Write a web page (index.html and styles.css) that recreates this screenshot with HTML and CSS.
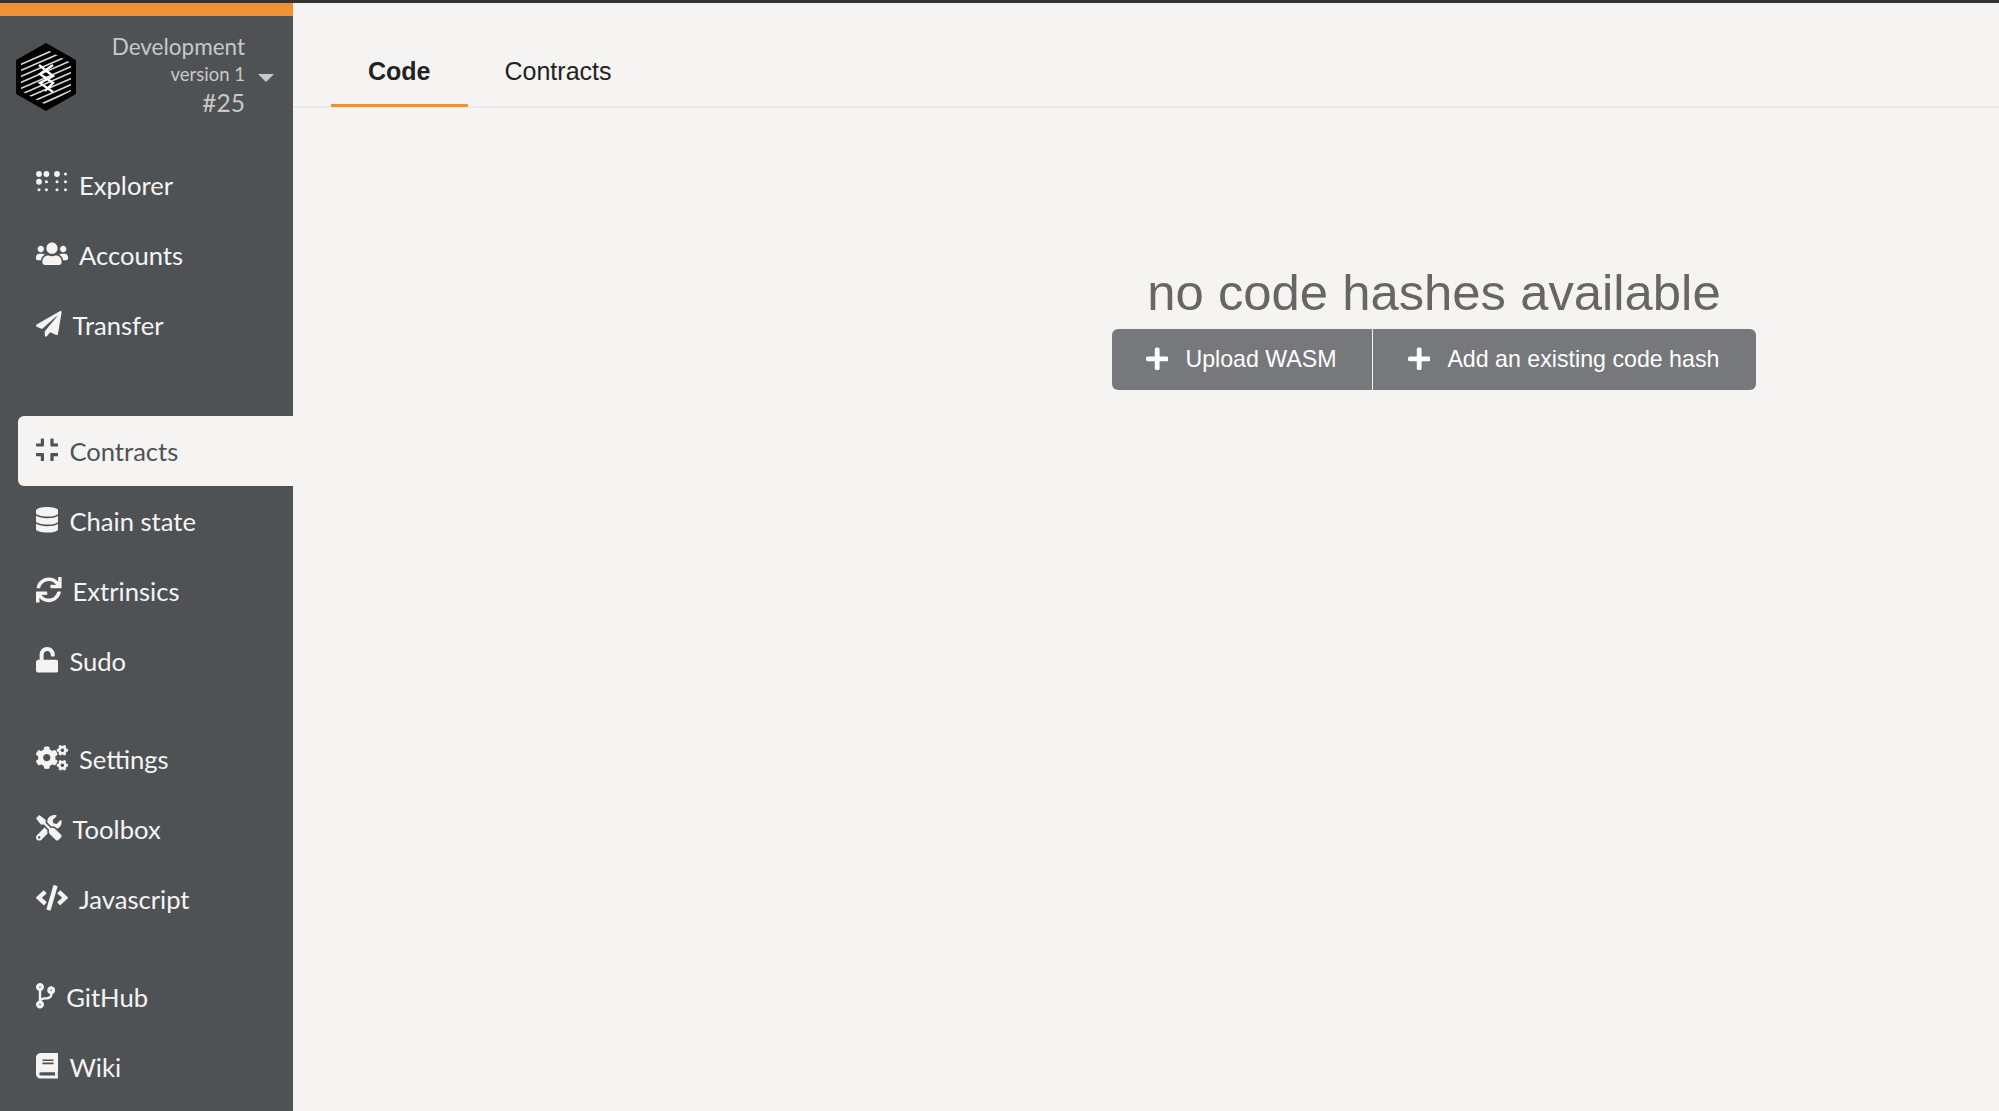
FILE: index.html
```html
<!DOCTYPE html>
<html lang="en">
<head>
  <meta charset="UTF-8">
  <title>Contracts</title>
  <link rel="stylesheet" href="styles.css">
</head>
<body>
  <div class="topbar"></div>
  <div class="app">
    <aside class="sidebar">
      <div class="chain">
        <svg class="logo" viewBox="1 0 60 68">
          <defs>
            <clipPath id="hexclip"><path d="M31 6 L56 20 V48 L31 62 L6 48 V20 Z"/></clipPath>
          </defs>
          <path d="M31 1 L60 17.5 V50.5 L31 67 L2 50.5 V17.5 Z" fill="#000" stroke="#000" stroke-width="2" stroke-linejoin="round"/>
          <g clip-path="url(#hexclip)" stroke="#d8d8d8" stroke-width="1.7">
            <path d="M0 18 L36 2"/>
            <path d="M0 24 L50 2"/>
            <path d="M0 30 L62 3"/>
            <path d="M0 36 L62 9"/>
            <path d="M0 42 L62 15"/>
            <path d="M0 48 L62 21"/>
            <path d="M0 54 L62 27"/>
            <path d="M4 58 L62 33"/>
            <path d="M12 61 L62 39"/>
            <path d="M22 63 L62 45"/>
            <path d="M32 65 L62 52"/>
          </g>
          <path d="M24 22 L38 33 L25 40 L38 49 M38 22 L25 31 L38 40 L30 48" fill="none" stroke="#fff" stroke-width="2.4"/>
        </svg>
        <div class="chain-info">
          <div class="chain-name">Development</div>
          <div class="chain-version">version 1</div>
          <div class="chain-block">#25</div>
        </div>
        <span class="caret"></span>
      </div>

      <nav class="nav">
        <a class="item">
          <svg class="icon" viewBox="0 0 640 512">
            <circle cx="60" cy="60" r="58"/><circle cx="208" cy="60" r="58"/><circle cx="420" cy="60" r="58"/><circle cx="590" cy="60" r="30"/>
            <circle cx="60" cy="215" r="58"/><circle cx="208" cy="215" r="30"/><circle cx="420" cy="215" r="30"/><circle cx="590" cy="215" r="30"/>
            <circle cx="60" cy="375" r="30"/><circle cx="208" cy="375" r="30"/><circle cx="420" cy="375" r="30"/><circle cx="590" cy="375" r="30"/>
          </svg>
          Explorer
        </a>
        <a class="item">
          <svg class="icon" viewBox="0 0 640 512"><path d="M96 224c35.3 0 64-28.7 64-64s-28.7-64-64-64-64 28.7-64 64 28.7 64 64 64zm448 0c35.3 0 64-28.7 64-64s-28.7-64-64-64-64 28.7-64 64 28.7 64 64 64zm32 32h-64c-17.6 0-33.5 7.1-45.1 18.6 40.3 22.1 68.9 62 75.1 109.4h66c17.7 0 32-14.3 32-32v-32c0-35.3-28.7-64-64-64zm-256 0c61.9 0 112-50.1 112-112S381.9 32 320 32 208 82.1 208 144s50.1 112 112 112zm76.8 32h-8.3c-20.8 10-43.9 16-68.5 16s-47.6-6-68.5-16h-8.3C179.6 288 128 339.6 128 403.2V432c0 26.5 21.5 48 48 48h288c26.5 0 48-21.5 48-48v-28.8c0-63.6-51.6-115.2-115.2-115.2zm-223.7-13.4C161.5 263.1 145.6 256 128 256H64c-35.3 0-64 28.7-64 64v32c0 17.7 14.3 32 32 32h65.9c6.3-47.4 34.9-87.3 75.2-109.4z"/></svg>
          Accounts
        </a>
        <a class="item">
          <svg class="icon" viewBox="0 0 512 512"><path d="M476 3.2L12.5 270.6c-18.1 10.4-15.8 35.6 2.2 43.2L121 358.4l287.3-253.2c5.5-4.9 13.3 2.6 8.6 8.3L176 407v80.5c0 23.6 28.5 32.9 42.5 15.8L282 426l124.6 52.2c14.2 6 30.4-2.9 33-18.2l72-432C515 7.8 493.3-6.8 476 3.2z"/></svg>
          Transfer
        </a>

        <a class="item item-active group-large">
          <svg class="icon" viewBox="0 0 448 512"><path d="M436 192H312c-13.3 0-24-10.7-24-24V44c0-6.6 5.4-12 12-12h40c6.6 0 12 5.4 12 12v84h84c6.6 0 12 5.4 12 12v40c0 6.6-5.4 12-12 12zm-276-24V44c0-6.6-5.4-12-12-12h-40c-6.6 0-12 5.4-12 12v84H12c-6.6 0-12 5.4-12 12v40c0 6.6 5.4 12 12 12h124c13.3 0 24-10.7 24-24zm0 300V344c0-13.3-10.7-24-24-24H12c-6.6 0-12 5.4-12 12v40c0 6.6 5.4 12 12 12h84v84c0 6.6 5.4 12 12 12h40c6.6 0 12-5.4 12-12zm192 0v-84h84c6.6 0 12-5.4 12-12v-40c0-6.6-5.4-12-12-12H312c-13.3 0-24 10.7-24 24v124c0 6.6 5.4 12 12 12h40c6.6 0 12-5.4 12-12z"/></svg>
          Contracts
        </a>
        <a class="item">
          <svg class="icon" viewBox="0 0 448 512"><path d="M448 73.143v45.714C448 159.143 347.667 192 224 192S0 159.143 0 118.857V73.143C0 32.857 100.333 0 224 0s224 32.857 224 73.143zM448 176v102.857C448 319.143 347.667 352 224 352S0 319.143 0 278.857V176c48.125 33.143 136.208 48.572 224 48.572S399.874 209.143 448 176zm0 160v102.857C448 479.143 347.667 512 224 512S0 479.143 0 438.857V336c48.125 33.143 136.208 48.572 224 48.572S399.874 369.143 448 336z"/></svg>
          Chain state
        </a>
        <a class="item">
          <svg class="icon" viewBox="0 0 512 512"><path d="M440.65 12.57l4 82.77A247.16 247.16 0 0 0 255.83 8C134.73 8 33.91 94.92 12.29 209.82A12 12 0 0 0 24.09 224h49.05a12 12 0 0 0 11.67-9.26 175.91 175.91 0 0 1 317-56.94l-101.46-4.86a12 12 0 0 0-12.57 12v47.41a12 12 0 0 0 12 12H500a12 12 0 0 0 12-12V12a12 12 0 0 0-12-12h-47.37a12 12 0 0 0-11.98 12.57zM255.83 432a175.61 175.61 0 0 1-146-77.8l101.8 4.87a12 12 0 0 0 12.57-12v-47.4a12 12 0 0 0-12-12H12a12 12 0 0 0-12 12V500a12 12 0 0 0 12 12h47.35a12 12 0 0 0 12-12.6l-4.15-82.57A247.17 247.17 0 0 0 255.83 504c121.11 0 221.93-86.92 243.55-201.82a12 12 0 0 0-11.8-14.18h-49.05a12 12 0 0 0-11.67 9.26A175.86 175.86 0 0 1 255.83 432z"/></svg>
          Extrinsics
        </a>
        <a class="item">
          <svg class="icon" viewBox="0 0 448 512"><path d="M400 256H152V152.9c0-39.6 31.7-72.5 71.3-72.9 40-.4 72.7 32.1 72.7 72v16c0 13.3 10.7 24 24 24h32c13.3 0 24-10.7 24-24v-16C376 68 307.5-.3 223.5 0 139.5.3 72 69.5 72 153.5V256H48c-26.5 0-48 21.5-48 48v160c0 26.5 21.5 48 48 48h352c26.5 0 48-21.5 48-48V304c0-26.5-21.5-48-48-48z"/></svg>
          Sudo
        </a>

        <a class="item group">
          <svg class="icon" viewBox="0 0 640 512"><path d="M512.1 191l-8.2 14.3c-3 5.3-9.4 7.5-15.1 5.4-11.8-4.4-22.6-10.7-32.1-18.6-4.6-3.8-5.8-10.5-2.8-15.7l8.2-14.3c-6.9-8-12.3-17.3-15.9-27.4h-16.5c-6 0-11.2-4.3-12.2-10.3-2-12-2.1-24.6 0-37.1 1-6 6.2-10.4 12.2-10.4h16.5c3.6-10.1 9-19.4 15.9-27.4l-8.2-14.3c-3-5.2-1.9-11.9 2.8-15.7 9.5-7.9 20.4-14.2 32.1-18.6 5.7-2.1 12.1.1 15.1 5.4l8.2 14.3c10.5-1.9 21.2-1.9 31.7 0L552 6.3c3-5.3 9.4-7.5 15.1-5.4 11.8 4.4 22.6 10.7 32.1 18.6 4.6 3.8 5.8 10.5 2.8 15.7l-8.2 14.3c6.9 8 12.3 17.3 15.9 27.4h16.5c6 0 11.2 4.3 12.2 10.3 2 12 2.1 24.6 0 37.1-1 6-6.2 10.4-12.2 10.4h-16.5c-3.6 10.1-9 19.4-15.9 27.4l8.2 14.3c3 5.2 1.9 11.9-2.8 15.7-9.5 7.9-20.4 14.2-32.1 18.6-5.7 2.1-12.1-.1-15.1-5.4l-8.2-14.3c-10.4 1.9-21.2 1.9-31.7 0zm-10.5-58.8c38.5 29.6 82.4-14.3 52.8-52.8-38.5-29.7-82.4 14.3-52.8 52.8zM386.3 286.1l33.7 16.8c10.1 5.8 14.5 18.1 10.5 29.1-8.9 24.2-26.4 46.4-42.6 65.8-7.4 8.9-20.2 11.1-30.3 5.3l-29.1-16.8c-16 13.7-34.6 24.6-54.9 31.7v33.6c0 11.6-8.3 21.6-19.7 23.6-24.6 4.2-50.4 4.4-75.9 0-11.5-2-20-11.9-20-23.6V418c-20.3-7.2-38.9-18-54.9-31.7L74 403c-10 5.8-22.9 3.6-30.3-5.3-16.2-19.4-33.3-41.6-42.2-65.7-4-10.9.4-23.2 10.5-29.1l33.3-16.8c-3.9-20.9-3.9-42.4 0-63.4L12 205.8c-10.1-5.8-14.6-18.1-10.5-29 8.9-24.2 26-46.4 42.2-65.8 7.4-8.9 20.2-11.1 30.3-5.3l29.1 16.8c16-13.7 34.6-24.6 54.9-31.7V57.1c0-11.5 8.2-21.5 19.6-23.5 24.6-4.2 50.5-4.4 76-.1 11.5 2 20 11.9 20 23.6v33.6c20.3 7.2 38.9 18 54.9 31.7l29.1-16.8c10-5.8 22.9-3.6 30.3 5.3 16.2 19.4 33.2 41.6 42.1 65.8 4 10.9.1 23.2-10 29.1l-33.7 16.8c3.9 21 3.9 42.5 0 63.5zm-117.6 21.1c59.2-77-28.7-164.9-105.7-105.7-59.2 77 28.7 164.9 105.7 105.7zm243.4 182.7l-8.2 14.3c-3 5.3-9.4 7.5-15.1 5.4-11.8-4.4-22.6-10.7-32.1-18.6-4.6-3.8-5.8-10.5-2.8-15.7l8.2-14.3c-6.9-8-12.3-17.3-15.9-27.4h-16.5c-6 0-11.2-4.3-12.2-10.3-2-12-2.1-24.6 0-37.1 1-6 6.2-10.4 12.2-10.4h16.5c3.6-10.1 9-19.4 15.9-27.4l-8.2-14.3c-3-5.2-1.9-11.9 2.8-15.7 9.5-7.9 20.4-14.2 32.1-18.6 5.7-2.1 12.1.1 15.1 5.4l8.2 14.3c10.5-1.9 21.2-1.9 31.7 0l8.2-14.3c3-5.3 9.4-7.5 15.1-5.4 11.8 4.4 22.6 10.7 32.1 18.6 4.6 3.8 5.8 10.5 2.8 15.7l-8.2 14.3c6.9 8 12.3 17.3 15.9 27.4h16.5c6 0 11.2 4.3 12.2 10.3 2 12 2.1 24.6 0 37.1-1 6-6.2 10.4-12.2 10.4h-16.5c-3.6 10.1-9 19.4-15.9 27.4l8.2 14.3c3 5.2 1.9 11.9-2.8 15.7-9.5 7.9-20.4 14.2-32.1 18.6-5.7 2.1-12.1-.1-15.1-5.4l-8.2-14.3c-10.4 1.9-21.2 1.9-31.7 0zM501.6 431c38.5 29.6 82.4-14.3 52.8-52.8-38.5-29.6-82.4 14.3-52.8 52.8z"/></svg>
          Settings
        </a>
        <a class="item">
          <svg class="icon" viewBox="0 0 512 512"><path d="M501.1 395.7L384 278.6c-23.1-23.1-57.6-27.6-85.4-13.9L192 158.1V96L64 0 0 64l96 128h62.1l106.6 106.6c-13.6 27.8-9.2 62.3 13.9 85.4l117.1 117.1c14.6 14.6 38.2 14.6 52.7 0l52.7-52.7c14.5-14.6 14.5-38.2 0-52.7zM331.7 225c28.3 0 54.9 11 74.9 31l19.4 19.4c15.8-6.9 30.8-16.5 43.8-29.5 37.1-37.1 49.7-89.3 37.9-136.7-2.2-9-13.5-12.1-20.1-5.5l-74.4 74.4-67.9-11.3L334 98.9l74.4-74.4c6.6-6.6 3.4-17.9-5.7-20.2-47.4-11.7-99.6.9-136.6 37.9-28.5 28.5-41.9 66.1-41.2 103.6l82.1 82.1c8.1-1.9 16.5-2.9 24.7-2.9zm-103.9 82l-56.7-56.7L18.7 402.8c-25 25-25 65.5 0 90.5s65.5 25 90.5 0l123.6-123.6c-7.6-19.9-9.9-41.6-5-62.7zM64 472c-13.2 0-24-10.8-24-24 0-13.3 10.7-24 24-24s24 10.7 24 24c0 13.2-10.7 24-24 24z"/></svg>
          Toolbox
        </a>
        <a class="item">
          <svg class="icon" viewBox="0 0 640 512"><path d="M278.9 511.5l-61-17.7c-6.4-1.8-10-8.5-8.2-14.9L346.2 8.7c1.8-6.4 8.5-10 14.9-8.2l61 17.7c6.4 1.8 10 8.5 8.2 14.9L293.8 503.3c-1.9 6.4-8.5 10.1-14.9 8.2zm-114-112.2l43.5-46.4c4.6-4.9 4.3-12.7-.8-17.2L117 256l90.6-79.7c5.1-4.5 5.5-12.3.8-17.2l-43.5-46.4c-4.5-4.8-12.1-5.1-17-.5L3.8 247.2c-5.1 4.7-5.1 12.8 0 17.5l144.1 135.1c4.9 4.6 12.5 4.4 17-.5zm327.2.6l144.1-135.1c5.1-4.7 5.1-12.8 0-17.5L492.1 112.1c-4.8-4.5-12.4-4.3-17 .5L431.6 159c-4.6 4.9-4.3 12.7.8 17.2L523 256l-90.6 79.7c-5.1 4.5-5.5 12.3-.8 17.2l43.5 46.4c4.5 4.9 12.1 5.1 17 .6z"/></svg>
          Javascript
        </a>

        <a class="item group">
          <svg class="icon" viewBox="0 0 384 512"><path d="M384 144c0-44.2-35.8-80-80-80s-80 35.8-80 80c0 36.4 24.3 67.1 57.5 76.8-.6 16.1-4.2 28.5-11 36.9-15.4 19.2-49.3 22.4-85.2 25.7-28.2 2.6-57.4 5.4-81.3 16.9v-144c32.5-10.2 56-40.5 56-76.3 0-44.2-35.8-80-80-80S0 35.8 0 80c0 35.8 23.5 66.1 56 76.3v199.3C23.5 365.9 0 396.2 0 432c0 44.2 35.8 80 80 80s80-35.8 80-80c0-34-21.2-63.1-51.2-74.6 3.1-5.2 7.8-9.8 14.9-13.4 16.2-8.2 40.4-10.4 66.1-12.8 42.2-3.9 90-8.4 118.2-43.4 14-17.4 21.1-39.8 21.6-67.9 31.6-10.8 54.4-40.7 54.4-75.9zM80 64c8.8 0 16 7.2 16 16s-7.2 16-16 16-16-7.2-16-16 7.2-16 16-16zm0 384c-8.8 0-16-7.2-16-16s7.2-16 16-16 16 7.2 16 16-7.2 16-16 16zm224-320c8.8 0 16 7.2 16 16s-7.2 16-16 16-16-7.2-16-16 7.2-16 16-16z"/></svg>
          GitHub
        </a>
        <a class="item">
          <svg class="icon" viewBox="0 0 448 512"><path d="M448 360V24c0-13.3-10.7-24-24-24H96C43 0 0 43 0 96v320c0 53 43 96 96 96h328c13.3 0 24-10.7 24-24v-16c0-7.5-3.5-14.3-8.9-18.7-4.2-15.4-4.2-59.3 0-74.7 5.4-4.3 8.9-11.1 8.9-18.6zM128 134c0-3.3 2.7-6 6-6h212c3.3 0 6 2.7 6 6v20c0 3.3-2.7 6-6 6H134c-3.3 0-6-2.7-6-6v-20zm0 64c0-3.3 2.7-6 6-6h212c3.3 0 6 2.7 6 6v20c0 3.3-2.7 6-6 6H134c-3.3 0-6-2.7-6-6v-20zm253.4 250H96c-17.7 0-32-14.3-32-32 0-17.6 14.4-32 32-32h285.4c-1.9 17.1-1.9 46.9 0 64z"/></svg>
          Wiki
        </a>
      </nav>
    </aside>

    <main class="main">
      <div class="tabs">
        <a class="tab tab-active">Code</a>
        <a class="tab">Contracts</a>
      </div>
      <div class="empty">
        <h1 class="empty-title">no code hashes available</h1>
        <div class="buttons">
          <button class="btn">
            <svg class="btn-icon" viewBox="0 0 448 512"><path d="M416 208H272V64c0-17.67-14.33-32-32-32h-32c-17.67 0-32 14.33-32 32v144H32c-17.67 0-32 14.33-32 32v32c0 17.67 14.33 32 32 32h144v144c0 17.67 14.33 32 32 32h32c17.67 0 32-14.33 32-32V304h144c17.67 0 32-14.33 32-32v-32c0-17.67-14.33-32-32-32z"/></svg>
            Upload WASM
          </button>
          <button class="btn">
            <svg class="btn-icon" viewBox="0 0 448 512"><path d="M416 208H272V64c0-17.67-14.33-32-32-32h-32c-17.67 0-32 14.33-32 32v144H32c-17.67 0-32 14.33-32 32v32c0 17.67 14.33 32 32 32h144v144c0 17.67 14.33 32 32 32h32c17.67 0 32-14.33 32-32V304h144c17.67 0 32-14.33 32-32v-32c0-17.67-14.33-32-32-32z"/></svg>
            Add an existing code hash
          </button>
        </div>
      </div>
    </main>
  </div>
</body>
</html>
```

FILE: styles.css
```css
* {
  box-sizing: border-box;
}

html, body {
  height: 100%;
}

body {
  margin: 0;
  display: flex;
  flex-direction: column;
  overflow: hidden;
  background: #f5f4f3;
  font-family: "Liberation Sans", Arial, sans-serif;
}

.topbar {
  height: 3px;
  background: #333;
  flex: none;
}

.app {
  flex: 1;
  display: flex;
  min-height: 0;
}

/* sidebar */
.sidebar {
  width: 293px;
  flex: none;
  background: #4f5255;
  border-top: 13px solid #f19135;
  font-family: Lato, sans-serif;
}

.chain {
  height: 134px;
  display: flex;
  align-items: flex-start;
  padding: 20px 0 0 15px;
  color: #c8c8c8;
}

.logo {
  width: 62px;
  height: 68px;
  margin-top: 7px;
  flex: none;
}

.chain-info {
  width: 168px;
  text-align: right;
  line-height: 1;
}

.chain-name {
  font-size: 22.5px;
}

.chain-version {
  font-size: 18.5px;
  margin-top: 6px;
}

.chain-block {
  font-size: 24.5px;
  margin-top: 8px;
}

.caret {
  width: 0;
  height: 0;
  margin: 38px 0 0 13px;
  border-left: 8px solid transparent;
  border-right: 8px solid transparent;
  border-top: 8px solid #c8c8c8;
}

.nav {
  display: flex;
  flex-direction: column;
  padding-left: 18px;
}

.item {
  height: 70px;
  display: flex;
  align-items: center;
  gap: 11px;
  padding-left: 18px;
  font-size: 25.6px;
  color: #f5f4f3;
}

.item-active {
  background: #f5f4f3;
  color: #4f5255;
  border-radius: 6px 0 0 6px;
}

.group {
  margin-top: 28px;
}

.group-large {
  margin-top: 56px;
}

.icon {
  height: 25.6px;
  fill: currentColor;
  flex: none;
  margin-top: -2px;
}

/* main */
.main {
  flex: 1;
  min-width: 0;
}

.tabs {
  height: 105px;
  display: flex;
  padding-left: 38px;
  border-bottom: 2px solid #eaeaea;
}

.tab {
  height: 104px;
  display: flex;
  align-items: center;
  padding: 32px 37px 0;
  font-size: 25px;
  color: #222;
}

.tab-active {
  font-weight: bold;
  padding-top: 35px;
  border-bottom: 3px solid #f19135;
}

.empty {
  width: 644px;
  margin: 153px 0 0 819px;
  text-align: center;
}

.empty-title {
  margin: 0 0 6px;
  padding-top: 2px;
  font-size: 50.8px;
  font-weight: normal;
  line-height: 60px;
  color: #666;
}

.buttons {
  display: flex;
  height: 61px;
}

.btn {
  height: 61px;
  display: flex;
  align-items: center;
  gap: 17px;
  padding: 0 34px;
  border: none;
  background: #77787b;
  color: #fff;
  font-family: inherit;
  font-size: 23.2px;
  white-space: nowrap;
}

.btn:first-child {
  width: 260px;
  border-radius: 6px 0 0 6px;
  margin-right: 1px;
}

.btn:last-child {
  flex: 1;
  padding-left: 35px;
  border-radius: 0 6px 6px 0;
}

.btn-icon {
  height: 25.6px;
  fill: #fff;
  flex: none;
  margin-top: -1px;
}
```
